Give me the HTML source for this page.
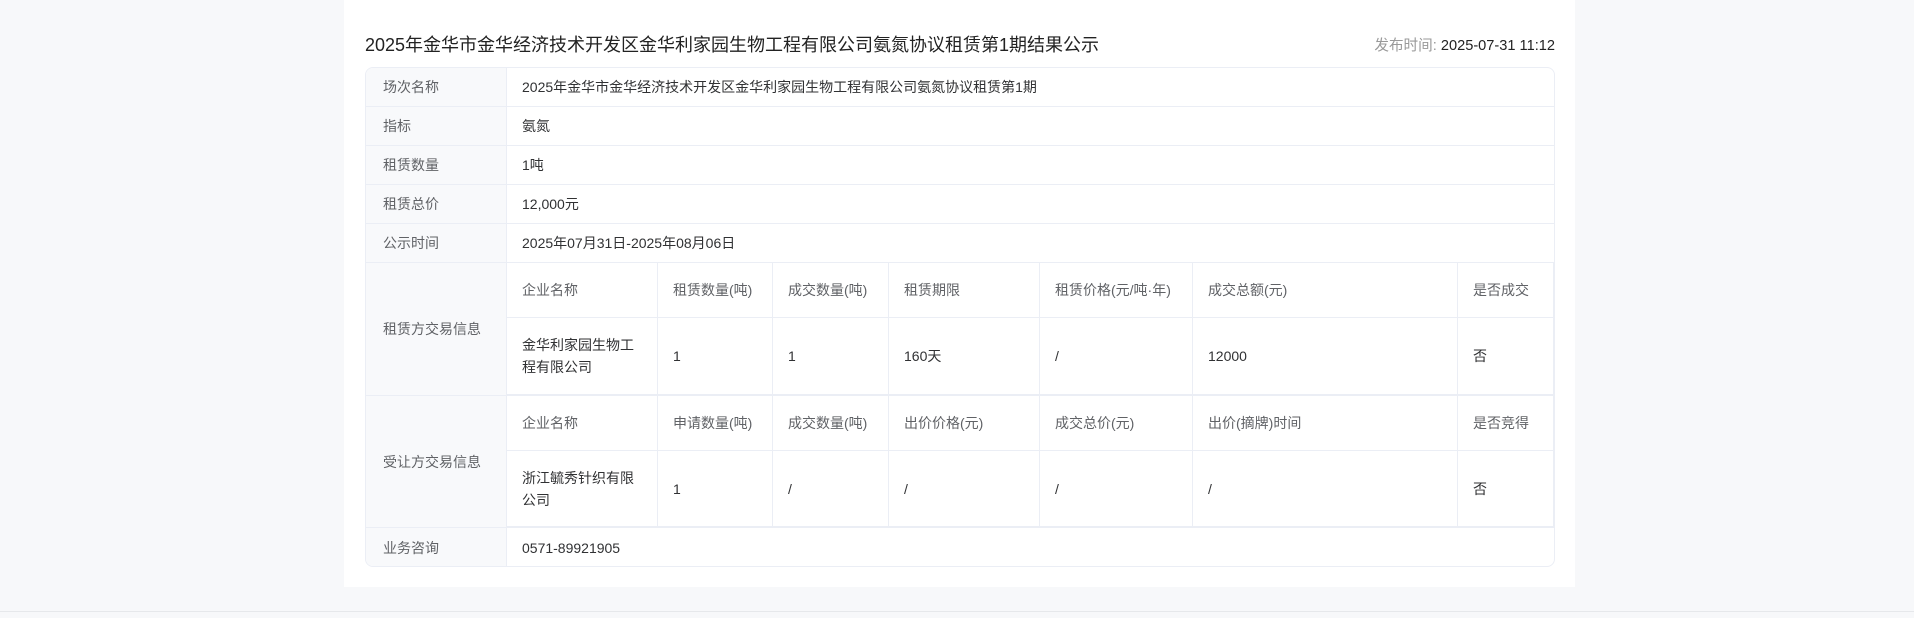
<!DOCTYPE html>
<html><head><meta charset="utf-8"><style>
*{margin:0;padding:0;box-sizing:border-box}
body{width:1914px;height:618px;background:#f7f8fa;font-family:"Liberation Sans","Noto Sans CJK SC",sans-serif;position:relative;overflow:hidden;font-size:14px;color:#303133}
.card{position:absolute;left:344px;top:0;width:1231px;height:587px;background:#fff}
.foot{position:absolute;left:0;top:611px;width:1914px;height:1px;background:#e6e8eb}
.title{position:absolute;left:365px;top:31px;font-size:18px;color:#222;white-space:nowrap}
.time{position:absolute;right:359px;top:34px;font-size:14.6px;color:#222;white-space:nowrap}
.time span{color:#999}
.tbl{position:absolute;left:365px;top:67px;width:1190px;height:500px;border:1px solid #ebeef5;border-radius:8px;overflow:hidden}
.a{position:absolute;display:flex;align-items:center;white-space:nowrap}
.lab{background:#f8f9fb;color:#606266;padding-left:17px;left:0;width:141px;border-bottom:1px solid #ebeef5;border-right:1px solid #ebeef5}
.val{left:141px;width:1049px;padding-left:15px;border-bottom:1px solid #ebeef5}
.c{border-right:1px solid #ebeef5;border-bottom:1px solid #ebeef5;padding-left:15px;white-space:normal;line-height:22px}
.h{color:#606266}
</style></head><body>
<div class="card"></div>
<div class="foot"></div>
<div class="title">2025年金华市金华经济技术开发区金华利家园生物工程有限公司氨氮协议租赁第1期结果公示</div>
<div class="time"><span>发布时间:</span> 2025-07-31 11:12</div>
<div class="tbl">
<div class="a lab" style="top:0;height:39px">场次名称</div><div class="a val" style="top:0;height:39px">2025年金华市金华经济技术开发区金华利家园生物工程有限公司氨氮协议租赁第1期</div>
<div class="a lab" style="top:39px;height:39px">指标</div><div class="a val" style="top:39px;height:39px">氨氮</div>
<div class="a lab" style="top:78px;height:39px">租赁数量</div><div class="a val" style="top:78px;height:39px">1吨</div>
<div class="a lab" style="top:117px;height:39px">租赁总价</div><div class="a val" style="top:117px;height:39px">12,000元</div>
<div class="a lab" style="top:156px;height:39px">公示时间</div><div class="a val" style="top:156px;height:39px">2025年07月31日-2025年08月06日</div>
<div class="a lab" style="top:195px;height:133px">租赁方交易信息</div>
<div class="a lab" style="top:328px;height:132px">受让方交易信息</div>
<div class="a lab" style="top:460px;height:40px;border-bottom:none">业务咨询</div><div class="a val" style="top:460px;height:40px;border-bottom:none">0571-89921905</div>

<div class="a c h" style="left:141px;top:195px;width:151px;height:55px">企业名称</div>
<div class="a c h" style="left:292px;top:195px;width:115px;height:55px">租赁数量(吨)</div>
<div class="a c h" style="left:407px;top:195px;width:116px;height:55px">成交数量(吨)</div>
<div class="a c h" style="left:523px;top:195px;width:151px;height:55px">租赁期限</div>
<div class="a c h" style="left:674px;top:195px;width:153px;height:55px">租赁价格(元/吨·年)</div>
<div class="a c h" style="left:827px;top:195px;width:265px;height:55px">成交总额(元)</div>
<div class="a c h" style="left:1092px;top:195px;width:96px;height:55px">是否成交</div>
<div class="a c" style="left:141px;top:250px;width:151px;height:78px;border-bottom-width:2px;padding-right:15px">金华利家园生物工程有限公司</div>
<div class="a c" style="left:292px;top:250px;width:115px;height:78px;border-bottom-width:2px">1</div>
<div class="a c" style="left:407px;top:250px;width:116px;height:78px;border-bottom-width:2px">1</div>
<div class="a c" style="left:523px;top:250px;width:151px;height:78px;border-bottom-width:2px">160天</div>
<div class="a c" style="left:674px;top:250px;width:153px;height:78px;border-bottom-width:2px">/</div>
<div class="a c" style="left:827px;top:250px;width:265px;height:78px;border-bottom-width:2px">12000</div>
<div class="a c" style="left:1092px;top:250px;width:96px;height:78px;border-bottom-width:2px">否</div>

<div class="a c h" style="left:141px;top:328px;width:151px;height:55px">企业名称</div>
<div class="a c h" style="left:292px;top:328px;width:115px;height:55px">申请数量(吨)</div>
<div class="a c h" style="left:407px;top:328px;width:116px;height:55px">成交数量(吨)</div>
<div class="a c h" style="left:523px;top:328px;width:151px;height:55px">出价价格(元)</div>
<div class="a c h" style="left:674px;top:328px;width:153px;height:55px">成交总价(元)</div>
<div class="a c h" style="left:827px;top:328px;width:265px;height:55px">出价(摘牌)时间</div>
<div class="a c h" style="left:1092px;top:328px;width:96px;height:55px">是否竞得</div>
<div class="a c" style="left:141px;top:383px;width:151px;height:77px;border-bottom-width:2px;padding-right:15px">浙江毓秀针织有限公司</div>
<div class="a c" style="left:292px;top:383px;width:115px;height:77px;border-bottom-width:2px">1</div>
<div class="a c" style="left:407px;top:383px;width:116px;height:77px;border-bottom-width:2px">/</div>
<div class="a c" style="left:523px;top:383px;width:151px;height:77px;border-bottom-width:2px">/</div>
<div class="a c" style="left:674px;top:383px;width:153px;height:77px;border-bottom-width:2px">/</div>
<div class="a c" style="left:827px;top:383px;width:265px;height:77px;border-bottom-width:2px">/</div>
<div class="a c" style="left:1092px;top:383px;width:96px;height:77px;border-bottom-width:2px">否</div>
</div>
</body></html>
